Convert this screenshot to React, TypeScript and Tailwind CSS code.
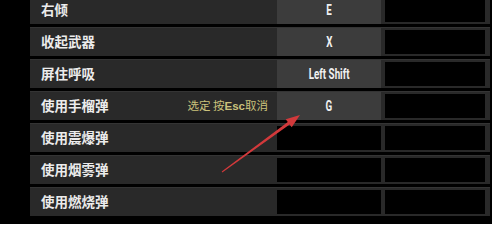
import React from "react";

type Row = { label: string; keyName?: string; hint?: boolean };

const rows: Row[] = [
  { label: "右倾", keyName: "E" },
  { label: "收起武器", keyName: "X" },
  { label: "屏住呼吸", keyName: "Left Shift" },
  { label: "使用手榴弹", keyName: "G", hint: true },
  { label: "使用震爆弹" },
  { label: "使用烟雾弹" },
  { label: "使用燃烧弹" },
];

export default function App() {
  return (
    <div className="relative w-[492px] h-[224px] bg-black overflow-hidden">
      <div className="flex flex-col gap-[3px] pl-[30px] pr-[2px] -mt-[5px]">
        {rows.map((r) => (
          <div
            key={r.label}
            className="flex h-[29px] bg-[#292929] border-t border-[#343434]"
          >
            <div className="flex-1 flex items-center justify-between pl-[11px] pr-[9px]">
              <span
                className="text-[13.5px] font-bold text-[#ececec] leading-none"
                style={{ fontFamily: '"Noto Sans CJK SC", sans-serif' }}
              >
                {r.label}
              </span>
              {r.hint && (
                <span
                  className="text-[11.5px] text-[#cbc27c] leading-none"
                  style={{ fontFamily: '"Noto Sans CJK SC", sans-serif' }}
                >
                  选定 按<span className="font-bold" style={{ fontFamily: '"Liberation Sans", sans-serif' }}>Esc</span>取消
                </span>
              )}
            </div>
            {r.keyName ? (
              <div className="w-[104px] bg-[#3c3c3c] flex items-center justify-center">
                <span
                  className="inline-block scale-x-[0.7] text-[14px] font-bold text-[#f0f0f0] leading-none"
                  style={{ fontFamily: '"Liberation Sans Narrow", Roboto, sans-serif' }}
                >
                  {r.keyName}
                </span>
              </div>
            ) : (
              <div className="w-[104px] my-[2px] bg-black" />
            )}
            <div className="w-[4px]" />
            <div className="w-[100px] my-[2px] bg-black" />
            <div className="w-[5px]" />
          </div>
        ))}
      </div>
      <svg
        className="absolute left-0 top-0"
        width="492"
        height="224"
        viewBox="0 0 492 224"
      >
        <polygon
          points="300,115 291.7,127.3 289.6,124.5 222.3,172.4 221.7,171.6 287.8,122.1 285.7,119.3"
          fill="#d2393b"
        />
      </svg>
    </div>
  );
}
